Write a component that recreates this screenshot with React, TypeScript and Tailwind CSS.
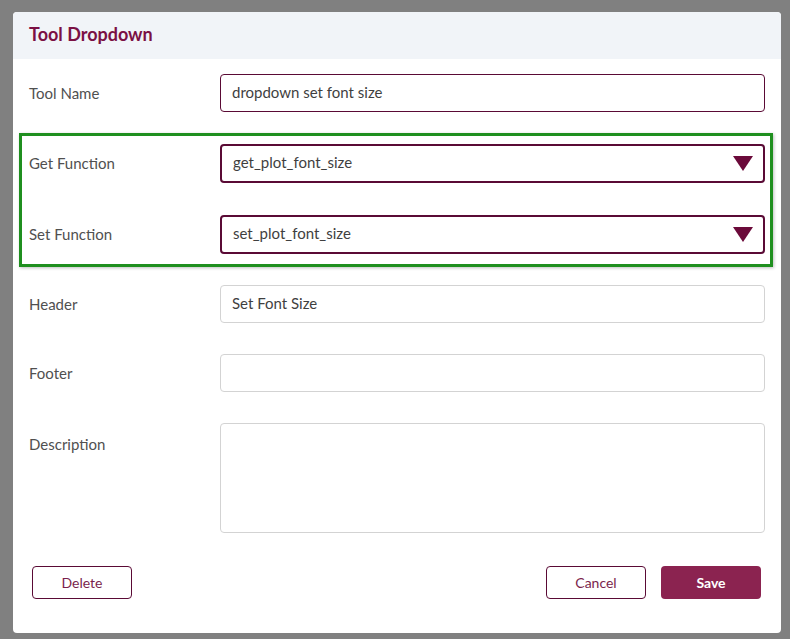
import React from 'react';

const font = { fontFamily: 'Lato, "Open Sans", Arial, sans-serif' };

const Caret = () => (
  <svg width="20" height="15" viewBox="0 0 20 15" className="shrink-0">
    <polygon points="0,0 20,0 10,15" fill="#6b0a3a" />
  </svg>
);

interface RowProps {
  label: string;
  children: React.ReactNode;
  top?: boolean;
}

const Row: React.FC<RowProps> = ({ label, children, top }) => (
  <div className={`flex ${top ? 'items-start' : 'items-center'}`}>
    <div className={`w-[191px] shrink-0 text-[15px] text-[#505050] ${top ? 'pt-[10px]' : ''}`}>{label}</div>
    <div className="flex-1">{children}</div>
  </div>
);

const TextInput = ({ value, strong }: { value: string; strong?: boolean }) => (
  <div
    className={`h-[38px] w-full rounded-[4px] border bg-white px-[11px] flex items-center text-[15px] text-[#3f3f3f] ${
      strong ? 'border-[#5a0a35]' : 'border-[#d3d3d3]'
    }`}
  >
    <span className="-mt-[2px]">{value}</span>
  </div>
);

const SelectBox = ({ value }: { value: string }) => (
  <div className="h-[39px] w-full rounded-[4px] border-2 border-[#5a0a35] bg-white pl-[11px] pr-[10px] flex items-center justify-between text-[15px] text-[#3f3f3f]">
    <span className="-mt-[3px]">{value}</span>
    <Caret />
  </div>
);

export default function App() {
  return (
    <div className="w-[790px] h-[639px] bg-[#808080] pt-[12px] pl-[13px]" style={font}>
      <div className="w-[768px] h-[621px] bg-white rounded-[4px] overflow-hidden flex flex-col">
        <div className="h-[47px] bg-[#f1f4f8] px-[16px] flex items-center">
          <h2 className="text-[18px] font-bold text-[#7b1044] -mt-[2px]">Tool Dropdown</h2>
        </div>

        <div className="flex flex-col pt-[15px] pl-[16px] pr-[16px]">
          <Row label="Tool Name">
            <TextInput value="dropdown set font size" strong />
          </Row>

          <div className="-ml-[10px] -mr-[8px] mt-[21px] border-[3px] border-[#1f8f1f] pl-[7px] pr-[5px] pt-[8px] pb-[10px] flex flex-col gap-[32px] shadow-[1px_1px_3px_rgba(0,0,0,0.25)]">
            <Row label="Get Function">
              <SelectBox value="get_plot_font_size" />
            </Row>
            <Row label="Set Function">
              <SelectBox value="set_plot_font_size" />
            </Row>
          </div>

          <div className="mt-[18px] flex flex-col gap-[31px]">
            <Row label="Header">
              <TextInput value="Set Font Size" />
            </Row>
            <Row label="Footer">
              <TextInput value="" />
            </Row>
            <Row label="Description" top>
              <div className="h-[110px] w-full rounded-[4px] border border-[#d3d3d3] bg-white" />
            </Row>
          </div>
        </div>

        <div className="mt-[33px] pl-[19px] pr-[20px] flex items-center">
          <button className="w-[100px] h-[33px] rounded-[4px] border border-[#5a0a35] text-[14px] text-[#7b1f4d] bg-white">
            Delete
          </button>
          <div className="ml-auto flex gap-[15px]">
            <button className="w-[100px] h-[33px] rounded-[4px] border border-[#5a0a35] text-[14px] text-[#7b1f4d] bg-white">
              Cancel
            </button>
            <button className="w-[100px] h-[33px] rounded-[4px] bg-[#8b2350] text-[14px] font-bold text-white">
              Save
            </button>
          </div>
        </div>
      </div>
    </div>
  );
}
